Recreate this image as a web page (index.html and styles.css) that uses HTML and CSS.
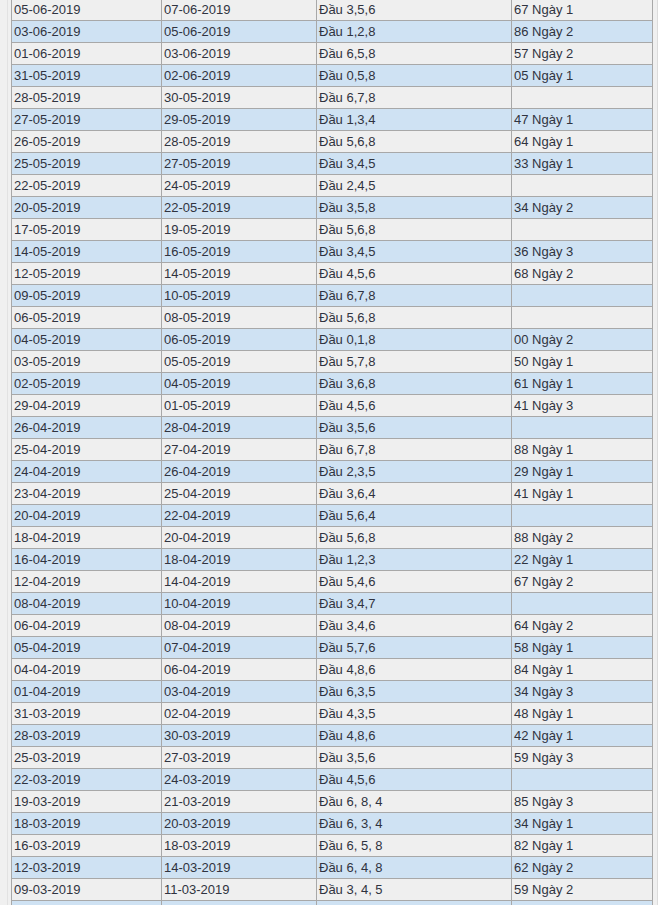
FILE: index.html
```html
<!DOCTYPE html>
<html lang="vi">
<head>
<meta charset="utf-8">
<title>Bảng thống kê</title>
<link rel="stylesheet" href="styles.css">
</head>
<body>
<div class="page">
  <div class="panel">
    <table class="stats">
      <colgroup>
        <col class="c1"><col class="c2"><col class="c3"><col class="c4">
      </colgroup>
      <tbody>
        <tr><td>05-06-2019</td><td>07-06-2019</td><td>Đầu 3,5,6</td><td>67 Ngày 1</td></tr>
        <tr><td>03-06-2019</td><td>05-06-2019</td><td>Đầu 1,2,8</td><td>86 Ngày 2</td></tr>
        <tr><td>01-06-2019</td><td>03-06-2019</td><td>Đầu 6,5,8</td><td>57 Ngày 2</td></tr>
        <tr><td>31-05-2019</td><td>02-06-2019</td><td>Đầu 0,5,8</td><td>05 Ngày 1</td></tr>
        <tr><td>28-05-2019</td><td>30-05-2019</td><td>Đầu 6,7,8</td><td></td></tr>
        <tr><td>27-05-2019</td><td>29-05-2019</td><td>Đầu 1,3,4</td><td>47 Ngày 1</td></tr>
        <tr><td>26-05-2019</td><td>28-05-2019</td><td>Đầu 5,6,8</td><td>64 Ngày 1</td></tr>
        <tr><td>25-05-2019</td><td>27-05-2019</td><td>Đầu 3,4,5</td><td>33 Ngày 1</td></tr>
        <tr><td>22-05-2019</td><td>24-05-2019</td><td>Đầu 2,4,5</td><td></td></tr>
        <tr><td>20-05-2019</td><td>22-05-2019</td><td>Đầu 3,5,8</td><td>34 Ngày 2</td></tr>
        <tr><td>17-05-2019</td><td>19-05-2019</td><td>Đầu 5,6,8</td><td></td></tr>
        <tr><td>14-05-2019</td><td>16-05-2019</td><td>Đầu 3,4,5</td><td>36 Ngày 3</td></tr>
        <tr><td>12-05-2019</td><td>14-05-2019</td><td>Đầu 4,5,6</td><td>68 Ngày 2</td></tr>
        <tr><td>09-05-2019</td><td>10-05-2019</td><td>Đầu 6,7,8</td><td></td></tr>
        <tr><td>06-05-2019</td><td>08-05-2019</td><td>Đầu 5,6,8</td><td></td></tr>
        <tr><td>04-05-2019</td><td>06-05-2019</td><td>Đầu 0,1,8</td><td>00 Ngày 2</td></tr>
        <tr><td>03-05-2019</td><td>05-05-2019</td><td>Đầu 5,7,8</td><td>50 Ngày 1</td></tr>
        <tr><td>02-05-2019</td><td>04-05-2019</td><td>Đầu 3,6,8</td><td>61 Ngày 1</td></tr>
        <tr><td>29-04-2019</td><td>01-05-2019</td><td>Đầu 4,5,6</td><td>41 Ngày 3</td></tr>
        <tr><td>26-04-2019</td><td>28-04-2019</td><td>Đầu 3,5,6</td><td></td></tr>
        <tr><td>25-04-2019</td><td>27-04-2019</td><td>Đầu 6,7,8</td><td>88 Ngày 1</td></tr>
        <tr><td>24-04-2019</td><td>26-04-2019</td><td>Đầu 2,3,5</td><td>29 Ngày 1</td></tr>
        <tr><td>23-04-2019</td><td>25-04-2019</td><td>Đầu 3,6,4</td><td>41 Ngày 1</td></tr>
        <tr><td>20-04-2019</td><td>22-04-2019</td><td>Đầu 5,6,4</td><td></td></tr>
        <tr><td>18-04-2019</td><td>20-04-2019</td><td>Đầu 5,6,8</td><td>88 Ngày 2</td></tr>
        <tr><td>16-04-2019</td><td>18-04-2019</td><td>Đầu 1,2,3</td><td>22 Ngày 1</td></tr>
        <tr><td>12-04-2019</td><td>14-04-2019</td><td>Đầu 5,4,6</td><td>67 Ngày 2</td></tr>
        <tr><td>08-04-2019</td><td>10-04-2019</td><td>Đầu 3,4,7</td><td></td></tr>
        <tr><td>06-04-2019</td><td>08-04-2019</td><td>Đầu 3,4,6</td><td>64 Ngày 2</td></tr>
        <tr><td>05-04-2019</td><td>07-04-2019</td><td>Đầu 5,7,6</td><td>58 Ngày 1</td></tr>
        <tr><td>04-04-2019</td><td>06-04-2019</td><td>Đầu 4,8,6</td><td>84 Ngày 1</td></tr>
        <tr><td>01-04-2019</td><td>03-04-2019</td><td>Đầu 6,3,5</td><td>34 Ngày 3</td></tr>
        <tr><td>31-03-2019</td><td>02-04-2019</td><td>Đầu 4,3,5</td><td>48 Ngày 1</td></tr>
        <tr><td>28-03-2019</td><td>30-03-2019</td><td>Đầu 4,8,6</td><td>42 Ngày 1</td></tr>
        <tr><td>25-03-2019</td><td>27-03-2019</td><td>Đầu 3,5,6</td><td>59 Ngày 3</td></tr>
        <tr><td>22-03-2019</td><td>24-03-2019</td><td>Đầu 4,5,6</td><td></td></tr>
        <tr><td>19-03-2019</td><td>21-03-2019</td><td>Đầu 6, 8, 4</td><td>85 Ngày 3</td></tr>
        <tr><td>18-03-2019</td><td>20-03-2019</td><td>Đầu 6, 3, 4</td><td>34 Ngày 1</td></tr>
        <tr><td>16-03-2019</td><td>18-03-2019</td><td>Đầu 6, 5, 8</td><td>82 Ngày 1</td></tr>
        <tr><td>12-03-2019</td><td>14-03-2019</td><td>Đầu 6, 4, 8</td><td>62 Ngày 2</td></tr>
        <tr><td>09-03-2019</td><td>11-03-2019</td><td>Đầu 3, 4, 5</td><td>59 Ngày 2</td></tr>
        <tr><td>06-03-2019</td><td>08-03-2019</td><td>Đầu 1, 2, 3</td><td></td></tr>
      </tbody>
    </table>
  </div>
</div>
</body>
</html>
```

FILE: styles.css
```css
html, body {
  margin: 0;
  padding: 0;
  background: #ffffff;
  overflow: hidden;
}

.page {
  width: 650px;
  padding-left: 7px;
  background: #f0f0f0;
  border-right: 1px solid #dcdcdc;
}

.panel {
  border-left: 1px solid #e2e2e2;
  padding: 0 5px 0 3px;
}

.stats {
  margin-top: -2px;
  width: 641px;
  table-layout: fixed;
  border-collapse: collapse;
  font-family: "Liberation Sans", Arial, sans-serif;
  font-size: 13px;
  color: #2f3340;
}

.c1 { width: 150px; }
.c2 { width: 155px; }
.c3 { width: 195px; }
.c4 { width: 141px; }

.stats td {
  border: 1px solid #a8a8a8;
  padding: 3px 2px;
  height: 15px;
  line-height: 15px;
  white-space: nowrap;
  overflow: hidden;
}

.stats tr:nth-child(odd) td { background: #efefef; }
.stats tr:nth-child(even) td { background: #cfe2f3; }
```
